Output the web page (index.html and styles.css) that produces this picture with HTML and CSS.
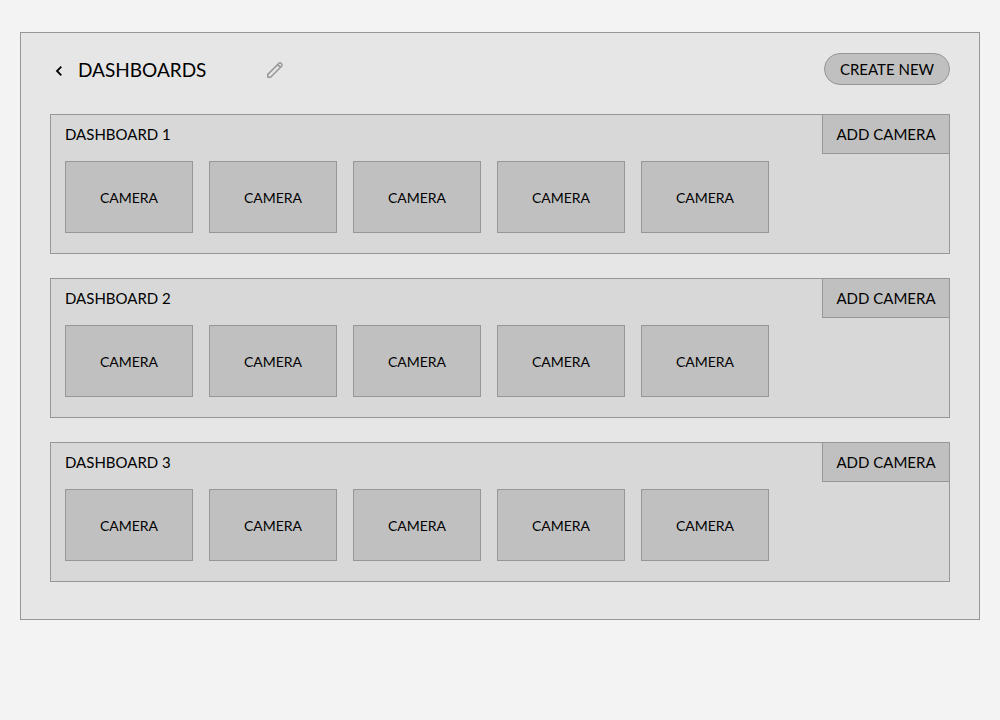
FILE: index.html
```html
<!DOCTYPE html>
<html lang="en">
<head>
<meta charset="utf-8">
<meta name="viewport" content="width=device-width, initial-scale=1">
<title>Dashboards</title>
<link rel="stylesheet" href="styles.css">
</head>
<body>
<main class="panel">
  <header class="header">
    <button class="icon-button back" type="button" aria-label="Back">
      <svg width="8" height="12" viewBox="0 0 8 12" fill="none" stroke="currentColor" stroke-width="1.8"><path d="M6.300 1.700 2 6l4.300 4.300"/></svg>
    </button>
    <h1 class="title">DASHBOARDS</h1>
    <button class="icon-button edit" type="button" aria-label="Edit">
      <svg width="18" height="18" viewBox="0 0 18 18" fill="none" stroke="currentColor" stroke-width="1.5" stroke-linejoin="round"><path d="M1.800 16.200V13.400L13 2.200Q14.100 1.300 15.300 2.500T15.800 5L4.600 16.200ZM11.600 3.600l2.800 2.800"/></svg>
    </button>
    <button class="create" type="button">CREATE NEW</button>
  </header>
  <div class="dashboards">
    <section class="dashboard">
      <div class="dashboard-head">
        <h2 class="dashboard-name">DASHBOARD 1</h2>
        <button class="add" type="button">ADD CAMERA</button>
      </div>
      <div class="cameras">
        <button class="camera" type="button">CAMERA</button>
        <button class="camera" type="button">CAMERA</button>
        <button class="camera" type="button">CAMERA</button>
        <button class="camera" type="button">CAMERA</button>
        <button class="camera" type="button">CAMERA</button>
      </div>
    </section>
    <section class="dashboard">
      <div class="dashboard-head">
        <h2 class="dashboard-name">DASHBOARD 2</h2>
        <button class="add" type="button">ADD CAMERA</button>
      </div>
      <div class="cameras">
        <button class="camera" type="button">CAMERA</button>
        <button class="camera" type="button">CAMERA</button>
        <button class="camera" type="button">CAMERA</button>
        <button class="camera" type="button">CAMERA</button>
        <button class="camera" type="button">CAMERA</button>
      </div>
    </section>
    <section class="dashboard">
      <div class="dashboard-head">
        <h2 class="dashboard-name">DASHBOARD 3</h2>
        <button class="add" type="button">ADD CAMERA</button>
      </div>
      <div class="cameras">
        <button class="camera" type="button">CAMERA</button>
        <button class="camera" type="button">CAMERA</button>
        <button class="camera" type="button">CAMERA</button>
        <button class="camera" type="button">CAMERA</button>
        <button class="camera" type="button">CAMERA</button>
      </div>
    </section>
  </div>
</main>
</body>
</html>
```

FILE: styles.css
```css
* {
  box-sizing: border-box;
}

body {
  margin: 0;
  padding: 32px 20px;
  background: #f3f3f3;
  color: #000;
  font-family: Lato, "Open Sans", sans-serif;
  font-size: 15px;
  line-height: 24px;
}

h1,
h2 {
  margin: 0;
  font-weight: 400;
}

button {
  margin: 0;
  padding: 0;
  border: 1px solid #979797;
  background: #c0c0c0;
  color: inherit;
  font: inherit;
  cursor: pointer;
}

.panel {
  padding: 20px 29px 37px;
  border: 1px solid #979797;
  background: #e6e6e6;
}

.header {
  display: flex;
  align-items: center;
  margin-bottom: 29px;
}

.icon-button {
  display: flex;
  border: 0;
  background: none;
}

.back {
  padding: 4px 15px 0 5px;
}

.title {
  padding-top: 2px;
  font-size: 19px;
}

.edit {
  margin-left: 60px;
  padding-top: 2px;
  color: #979797;
}

.create {
  min-width: 126px;
  height: 32px;
  margin-left: auto;
  padding: 0 14px;
  border-radius: 16px;
}

.dashboards {
  display: grid;
  gap: 24px;
}

.dashboard {
  padding-bottom: 20px;
  border: 1px solid #979797;
  background: #d8d8d8;
}

.dashboard-head {
  display: flex;
  align-items: center;
  justify-content: space-between;
  margin: -1px -1px 7px 0;
  padding-left: 14px;
}

.dashboard-name {
  font-size: 15px;
}

.add {
  min-width: 128px;
  height: 40px;
  padding: 0 12px;
}

.cameras {
  display: flex;
  flex-wrap: wrap;
  gap: 16px;
  padding: 0 14px;
}

.camera {
  width: 128px;
  height: 72px;
  padding-top: 2px;
  font-size: 14px;
}
```
